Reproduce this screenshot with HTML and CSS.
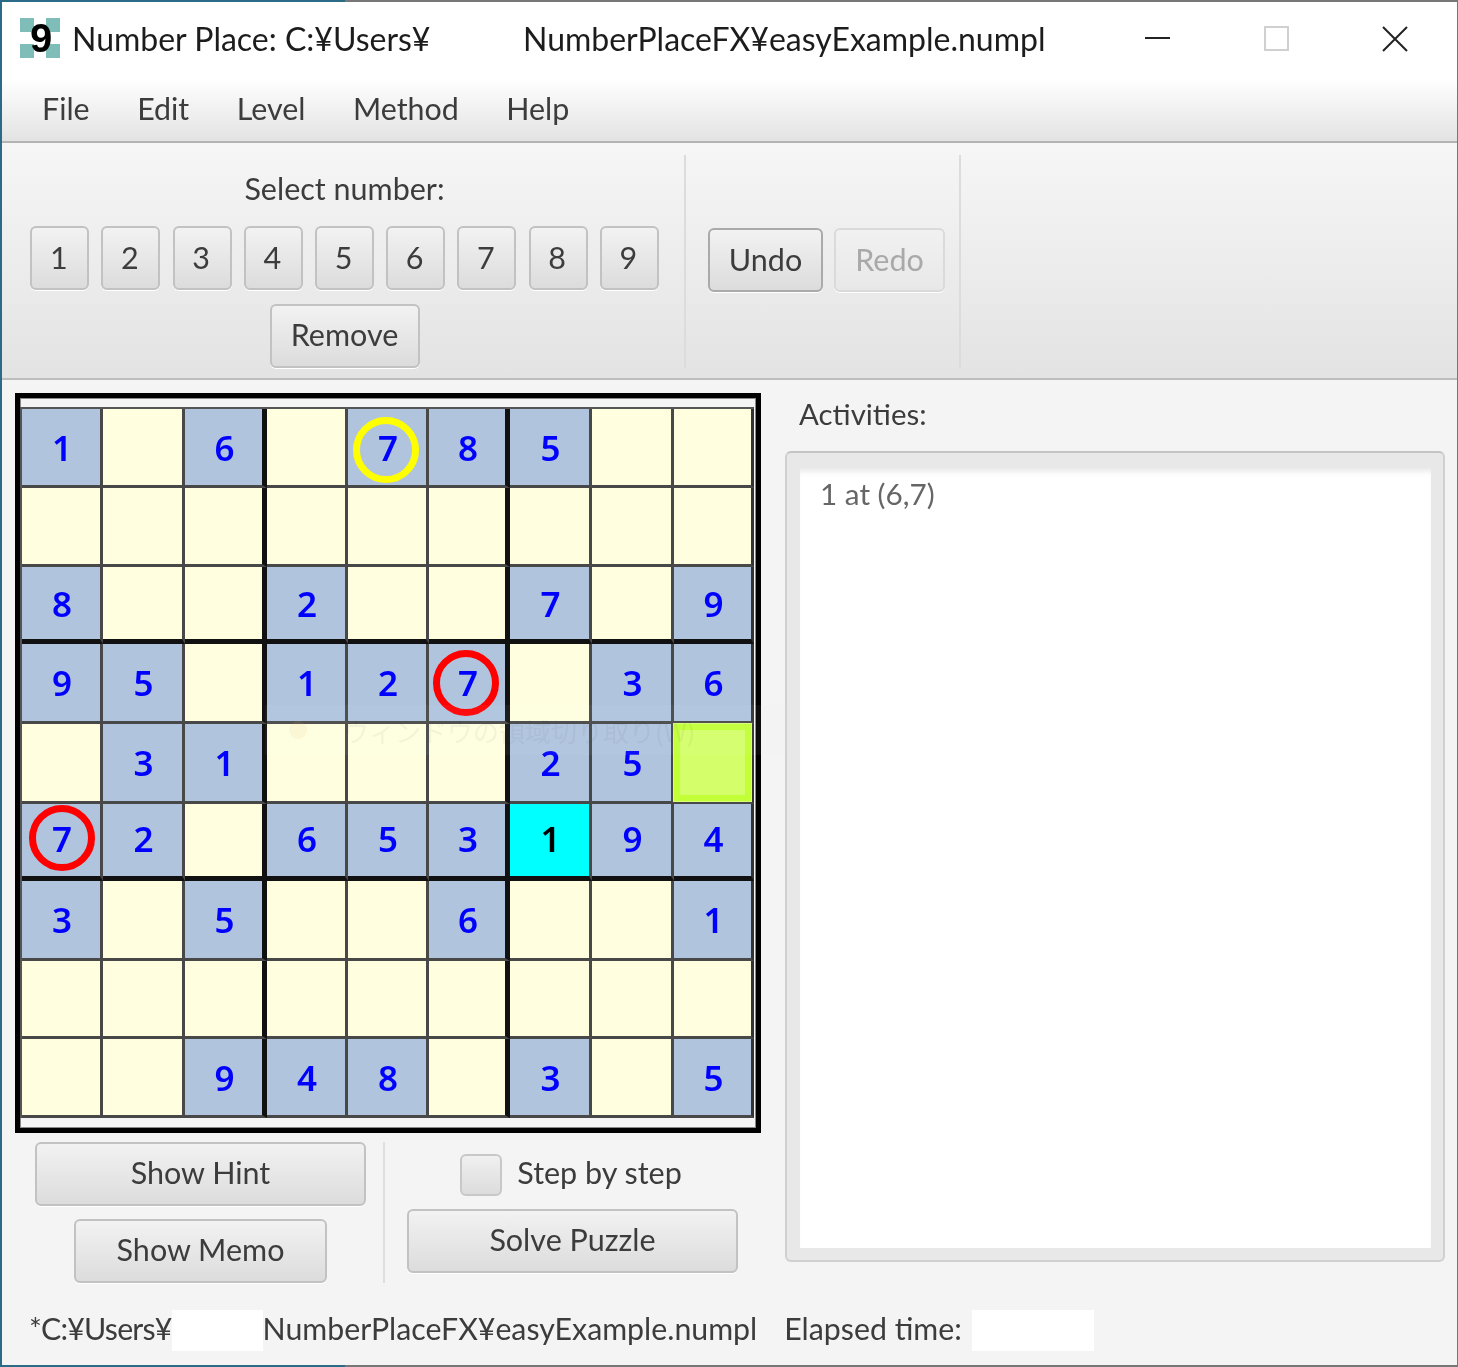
FILE: index.html
```html
<!DOCTYPE html>
<html lang="en">
<head>
<meta charset="utf-8">
<title>Number Place</title>
<link rel="stylesheet" href="styles.css">
</head>
<body>
<div class="window">
  <header class="titlebar">
    <div class="app-icon">9</div>
    <span class="title-a">Number Place: C:¥Users¥</span>
    <span class="title-b">NumberPlaceFX¥easyExample.numpl</span>
    <div class="win-controls">
      <svg width="26" height="26" viewBox="0 0 26 26" aria-hidden="true"><path d="M0 12h25" stroke="#222" stroke-width="2" fill="none"/></svg>
      <svg width="26" height="26" viewBox="0 0 26 26" aria-hidden="true"><rect x="1" y="1" width="23" height="23" stroke="#d0d0d0" stroke-width="2" fill="none"/></svg>
      <svg width="26" height="26" viewBox="0 0 26 26" aria-hidden="true"><path d="M1 1l24 24M25 1L1 25" stroke="#222" stroke-width="2" fill="none"/></svg>
    </div>
  </header>
  <nav class="menubar">
    <span>File</span><span>Edit</span><span>Level</span><span>Method</span><span>Help</span>
  </nav>
  <section class="toolbar">
    <div class="tool-numbers">
      <div class="tool-label">Select number:</div>
      <div class="num-row">
        <button class="btn num">1</button><button class="btn num">2</button><button class="btn num">3</button>
        <button class="btn num">4</button><button class="btn num">5</button><button class="btn num">6</button>
        <button class="btn num">7</button><button class="btn num">8</button><button class="btn num">9</button>
      </div>
      <button class="btn remove">Remove</button>
    </div>
    <div class="vsep"></div>
    <div class="tool-undo">
      <button class="btn undo">Undo</button>
      <button class="btn redo">Redo</button>
    </div>
    <div class="vsep"></div>
  </section>
  <main class="main">
    <div class="content">
      <div class="left">
        <div class="board">
          <div class="grid">
            <div class="cell g">1</div><div class="cell"></div><div class="cell g">6</div><div class="cell"></div><div class="cell g">7<i class="ring yellow"></i></div><div class="cell g">8</div><div class="cell g">5</div><div class="cell"></div><div class="cell"></div>
            <div class="cell"></div><div class="cell"></div><div class="cell"></div><div class="cell"></div><div class="cell"></div><div class="cell"></div><div class="cell"></div><div class="cell"></div><div class="cell"></div>
            <div class="cell g">8</div><div class="cell"></div><div class="cell"></div><div class="cell g">2</div><div class="cell"></div><div class="cell"></div><div class="cell g">7</div><div class="cell"></div><div class="cell g">9</div>
            <div class="cell g">9</div><div class="cell g">5</div><div class="cell"></div><div class="cell g">1</div><div class="cell g">2</div><div class="cell g">7<i class="ring red red-mid"></i></div><div class="cell"></div><div class="cell g">3</div><div class="cell g">6</div>
            <div class="cell"></div><div class="cell g">3</div><div class="cell g">1</div><div class="cell"></div><div class="cell"></div><div class="cell"></div><div class="cell g">2</div><div class="cell g">5</div><div class="cell cell-target"><i class="target"></i></div>
            <div class="cell g">7<i class="ring red red-left"></i></div><div class="cell g">2</div><div class="cell"></div><div class="cell g">6</div><div class="cell g">5</div><div class="cell g">3</div><div class="cell active">1</div><div class="cell g">9</div><div class="cell g">4</div>
            <div class="cell g">3</div><div class="cell"></div><div class="cell g">5</div><div class="cell"></div><div class="cell"></div><div class="cell g">6</div><div class="cell"></div><div class="cell"></div><div class="cell g">1</div>
            <div class="cell"></div><div class="cell"></div><div class="cell"></div><div class="cell"></div><div class="cell"></div><div class="cell"></div><div class="cell"></div><div class="cell"></div><div class="cell"></div>
            <div class="cell"></div><div class="cell"></div><div class="cell g">9</div><div class="cell g">4</div><div class="cell g">8</div><div class="cell"></div><div class="cell g">3</div><div class="cell"></div><div class="cell g">5</div>
          </div>
          <div class="ghost"><i class="ghost-dot"></i>ウィンドウの領域切り取り(W)</div>
        </div>
        <div class="controls">
          <div class="hint-col">
            <button class="btn hint">Show Hint</button>
            <button class="btn memo">Show Memo</button>
          </div>
          <div class="vsep ctl-sep"></div>
          <div class="solve-col">
            <div class="step"><span class="check"></span><span class="step-text">Step by step</span></div>
            <button class="btn hint">Solve Puzzle</button>
          </div>
        </div>
      </div>
      <div class="right">
        <div class="act-label">Activities:</div>
        <div class="textarea"><div class="textarea-inner">1 at (6,7)</div></div>
      </div>
    </div>
    <footer class="status">
      <span class="status-head">*C:¥Users¥</span><span class="mask path-mask"></span><span>NumberPlaceFX¥easyExample.numpl</span>
      <span class="elapsed">Elapsed time:</span><span class="mask time-mask"></span>
    </footer>
  </main>
</div>
</body>
</html>
```
FILE: styles.css
```css
* { box-sizing: border-box; }
html, body { margin: 0; padding: 0; }
body {
  width: 1458px;
  height: 1367px;
  overflow: hidden;
  font-family: "Lato", "Noto Sans", sans-serif;
  font-size: 30.5px;
  color: #3c3c3c;
}
.window {
  width: 1458px;
  height: 1367px;
  padding: 2px 1px 2px 2px;
  background: linear-gradient(90deg, #2c6b88 0 345px, #777 345px);
  display: flex;
  flex-direction: column;
  filter: blur(0.45px);
}
.titlebar {
  height: 76px;
  background: #fff;
  display: flex;
  align-items: center;
  padding-left: 18px;
  padding-bottom: 4px;
  color: #1c1c1c;
  flex: none;
  font-size: 32px;
}
.app-icon {
  flex: none;
  width: 40px;
  height: 40px;
  padding-left: 2px;
  text-align: center;
  font: 700 40px/40px "Liberation Sans", sans-serif;
  color: #000;
  background:
    linear-gradient(#7fbdb8, #7fbdb8) 0 0 / 14px 14px no-repeat,
    linear-gradient(#7fbdb8, #7fbdb8) 100% 0 / 14px 14px no-repeat,
    linear-gradient(#7fbdb8, #7fbdb8) 0 100% / 14px 14px no-repeat,
    linear-gradient(#7fbdb8, #7fbdb8) 100% 100% / 14px 14px no-repeat,
    #fff;
}
.title-a { margin-left: 12px; width: 356px; white-space: nowrap; }
.title-b { margin-left: 95px; white-space: nowrap; }
.win-controls {
  margin-left: auto;
  margin-top: 2px;
  width: 312px;
  display: flex;
  justify-content: space-between;
  padding: 0 49px 0 0;
}
.win-controls svg { flex: none; }
.menubar {
  height: 65px;
  flex: none;
  display: flex;
  align-items: center;
  gap: 47.5px;
  padding-left: 40px;
  padding-bottom: 4px;
  font-size: 30.4px;
  background: linear-gradient(#ffffff, #e3e3e3);
  border-bottom: 2px solid #b4b4b4;
}
.toolbar {
  height: 237px;
  flex: none;
  display: flex;
  padding-top: 12px;
  padding-bottom: 10px;
  background: linear-gradient(#f6f6f6, #e3e3e3);
  border-bottom: 2px solid #bdbdbd;
}
.tool-numbers {
  width: 682px;
  padding-left: 3px;
  display: flex;
  flex-direction: column;
  align-items: center;
}
.tool-label { height: 71px; line-height: 66px; }
.num-row { display: flex; gap: 12.2px; }
.vsep { width: 2px; background: #dcdcdc; flex: none; }
.btn {
  font: inherit;
  color: #3c3c3c;
  padding: 0 0 3px;
  height: 64px;
  border: 2px solid #c2c2c2;
  border-radius: 6px;
  background: linear-gradient(#f2f2f2, #dcdcdc);
  box-shadow: 0 1px 0 #fff;
}
.num { width: 59px; padding-right: 2px; }
.remove { width: 150px; margin-top: 14px; padding-bottom: 5px; }
.tool-undo {
  width: 273px;
  display: flex;
  gap: 11px;
  padding: 73px 0 0 22px;
  align-items: flex-start;
}
.undo { width: 115px; border-color: #aaa; }
.redo { width: 111px; color: #a9a9a9; border-color: #dadada; background: linear-gradient(#f1f1f1, #e8e8e8); }
.main {
  flex: 1;
  background: #f4f4f4;
  padding-top: 13px;
  display: flex;
  flex-direction: column;
}
.content { display: flex; padding-left: 13px; }
.left { width: 746px; flex: none; }
.board {
  position: relative;
  width: 746px;
  height: 740px;
  border: 5px solid #000;
  padding: 9px 2px 0 0;
  box-shadow: inset 0 0 0 1px #888;
}
.grid {
  display: grid;
  width: 734px;
  height: 711px;
  grid-template-columns: 81px 82px 82px 81px 81px 81px 82px 82px 80px;
  grid-template-rows: 79px 79px 77px 80px 80px 77px 80px 78px 79px;
  border-top: 2px solid #555;
  border-left: 2px solid #555;
}
.cell {
  position: relative;
  background: #ffffe0;
  border-right: 3px solid #484848;
  border-bottom: 3px solid #484848;
  padding-left: 2px;
  display: flex;
  align-items: center;
  justify-content: center;
  font: 600 35px "Noto Sans", sans-serif;
  color: #0000ff;
  line-height: 1;
}
.cell:nth-child(9n+3), .cell:nth-child(9n+6) { border-right: 5px solid #111; }
.cell:nth-child(9n) { border-right-color: #333; }
.cell:nth-child(n+19):nth-child(-n+27), .cell:nth-child(n+46):nth-child(-n+54) { border-bottom: 5px solid #111; }
.cell:nth-child(n+46):nth-child(-n+54) { padding-bottom: 3px; }
.cell-target { padding-left: 0; }
.g { background: #b0c4de; }
.active { background: #00ffff; color: #000; }
.ring {
  position: absolute;
  left: 50%;
  top: 50%;
  width: 66px;
  height: 66px;
  margin: -33px 0 0 -33px;
  border-radius: 50%;
  border: 7px solid;
}
.ring.yellow { border-color: #ffff00; margin: -30px 0 0 -34px; }
.ring.red { border-color: #ff0000; }
.ring.red-mid { margin: -33px 0 0 -34px; }
.ring.red-left { margin: -35px 0 0 -32px; }
.target {
  width: 100%;
  height: 100%;
  background: #d4ff6a;
  border: 6px solid #c2ff36;
  outline: 1px solid #d8ff77;
}
.ghost {
  position: absolute;
  left: 245px;
  top: 307px;
  width: 530px;
  height: 50px;
  background: rgba(240, 244, 250, 0.05);
  color: rgba(60, 60, 60, 0.06);
  font: 26px "Noto Sans CJK JP", sans-serif;
  display: flex;
  align-items: center;
  gap: 36px;
  padding-left: 24px;
  white-space: nowrap;
  pointer-events: none;
}
.ghost-dot {
  width: 18px;
  height: 18px;
  border-radius: 50%;
  background: rgba(230, 180, 90, 0.1);
}
.controls { display: flex; margin-top: 9px; padding-left: 20px; height: 141px; }
.hint-col { width: 331px; display: flex; flex-direction: column; align-items: center; gap: 13px; flex: none; }
.hint { width: 331px; flex: none; padding-bottom: 5px; }
.memo { width: 253px; flex: none; padding-bottom: 5px; }
.ctl-sep { margin-left: 17px; background: #dedede; }
.solve-col { margin-left: 22px; width: 331px; display: flex; flex-direction: column; padding-top: 12px; gap: 13px; }
.step { height: 42px; display: flex; align-items: center; justify-content: center; gap: 15px; padding-right: 3px; }
.step-text { padding-bottom: 6px; }
.check {
  width: 42px;
  height: 42px;
  border: 2px solid #c8c8c8;
  border-radius: 6px;
  background: linear-gradient(#f0f0f0, #dcdcdc);
}
.right { margin-left: 24px; width: 660px; flex: none; }
.act-label { height: 58px; padding: 1px 0 0 14px; line-height: 40px; font-size: 29.4px; }
.textarea {
  height: 811px;
  padding: 15px 12px 12px 13px;
  background: #e8e8e8;
  border: 2px solid #d0d0d0;
  border-top-color: #c4c4c4;
  border-radius: 6px;
}
.textarea-inner {
  height: 100%;
  background: #fff;
  padding: 6px 20px;
  line-height: 40px;
  font-size: 29.7px;
  color: #666;
  box-shadow: inset 0 7px 6px -4px #e6e6e6;
}
.status {
  display: flex;
  align-items: center;
  margin-top: 27px;
  height: 41px;
  padding-left: 27px;
  white-space: nowrap;
  font-size: 30.3px;
  line-height: 37px;
}
.status > span:not(.mask) { align-self: flex-start; }
.status-head { letter-spacing: -0.8px; }
.mask { background: #fff; height: 41px; flex: none; }
.path-mask { width: 91px; }
.elapsed { margin-left: 27px; }
.time-mask { width: 122px; margin-left: 10px; }
```
